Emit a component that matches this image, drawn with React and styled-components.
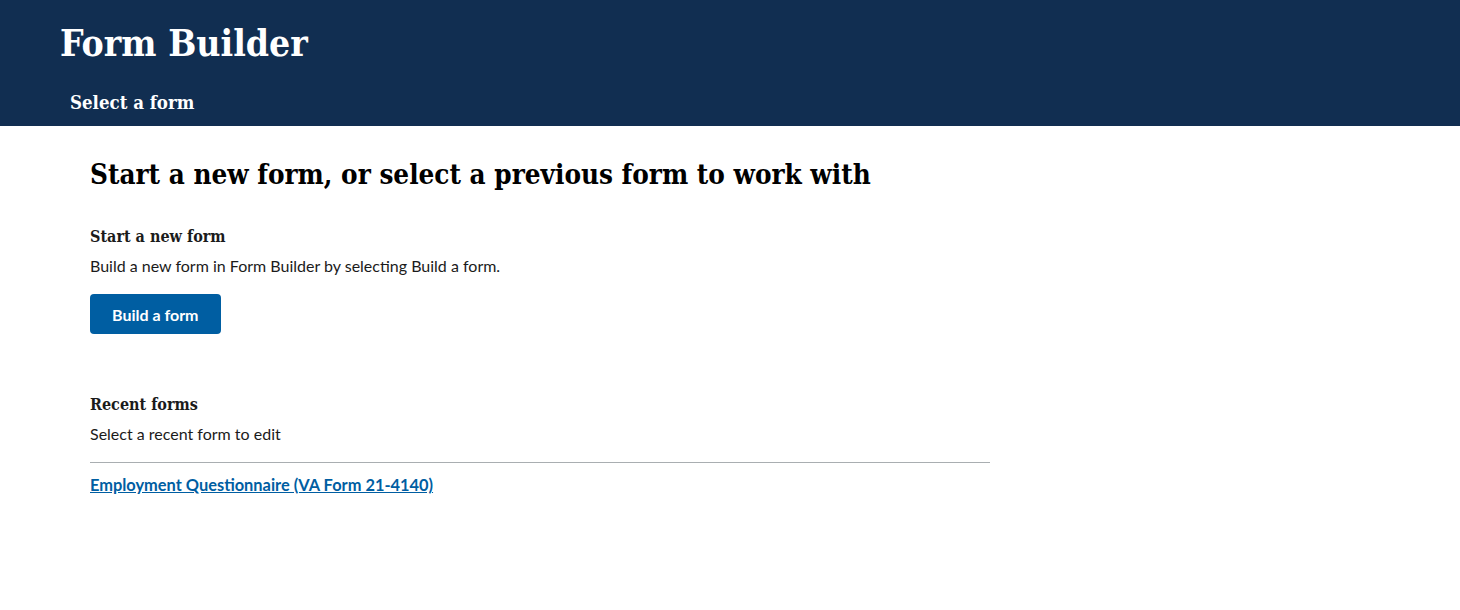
import React from "react";
import styled, { createGlobalStyle } from "styled-components";

const GlobalStyle = createGlobalStyle`
  body {
    margin: 0;
    background: #fff;
    font-family: Lato, "Noto Sans", sans-serif;
    color: #1b1b1b;
  }
`;

const serif = `"DejaVu Serif Condensed", "DejaVu Serif", "Liberation Serif", serif`;

const App = () => {
  return (
    <>
      <GlobalStyle />
      <Header>
        <AppTitle>Form Builder</AppTitle>
        <PageTitle>Select a form</PageTitle>
      </Header>
      <Main>
        <Heading>Start a new form, or select a previous form to work with</Heading>
        <Section>
          <SubHeading>Start a new form</SubHeading>
          <Text>Build a new form in Form Builder by selecting Build a form.</Text>
          <Button type="button">Build a form</Button>
        </Section>
        <Section $gap>
          <SubHeading>Recent forms</SubHeading>
          <Text>Select a recent form to edit</Text>
          <FormList>
            <FormItem>
              <FormLink href="#">Employment Questionnaire (VA Form 21-4140)</FormLink>
            </FormItem>
          </FormList>
        </Section>
      </Main>
    </>
  );
};

const Header = styled.header`
  background: #112e51;
  height: 126px;
  box-sizing: border-box;
  padding: 18px 60px 0;
`;

const AppTitle = styled.h1`
  margin: 0;
  font-family: ${serif};
  font-stretch: condensed;
  font-size: 37px;
  font-weight: 700;
  line-height: 50px;
  color: #fff;
`;

const PageTitle = styled.div`
  margin: 22px 0 0 10px;
  font-family: ${serif};
  font-stretch: condensed;
  font-size: 18.5px;
  font-weight: 700;
  line-height: 26px;
  color: #fff;
`;

const Main = styled.main`
  padding: 28px 90px 0;
`;

const Heading = styled.h2`
  margin: 0;
  font-family: ${serif};
  font-stretch: condensed;
  font-size: 27.6px;
  font-weight: 700;
  line-height: 42px;
  color: #000;
`;

const Section = styled.section`
  margin-top: ${(p) => (p.$gap ? "58px" : "28px")};
`;

const SubHeading = styled.h3`
  margin: 0;
  font-family: ${serif};
  font-stretch: condensed;
  font-size: 16px;
  font-weight: 700;
  line-height: 26px;
  color: #1b1b1b;
`;

const Text = styled.p`
  margin: 4px 0 0;
  font-size: 16px;
  line-height: 24px;
`;

const Button = styled.button`
  margin-top: 16px;
  height: 40px;
  padding: 0 22px;
  border: 0;
  border-radius: 4px;
  background: #005ea2;
  color: #fff;
  font-family: Lato, "Noto Sans", sans-serif;
  font-size: 16px;
  font-weight: 700;
  cursor: pointer;
`;

const FormList = styled.ul`
  list-style: none;
  margin: 16px 0 0;
  padding: 0;
  width: 900px;
  border-top: 1px solid #a9aeb1;
`;

const FormItem = styled.li`
  padding-top: 12px;
`;

const FormLink = styled.a`
  font-size: 16.4px;
  font-weight: 700;
  line-height: 20px;
  color: #005ea2;
  text-decoration: underline;
`;

export default App;
